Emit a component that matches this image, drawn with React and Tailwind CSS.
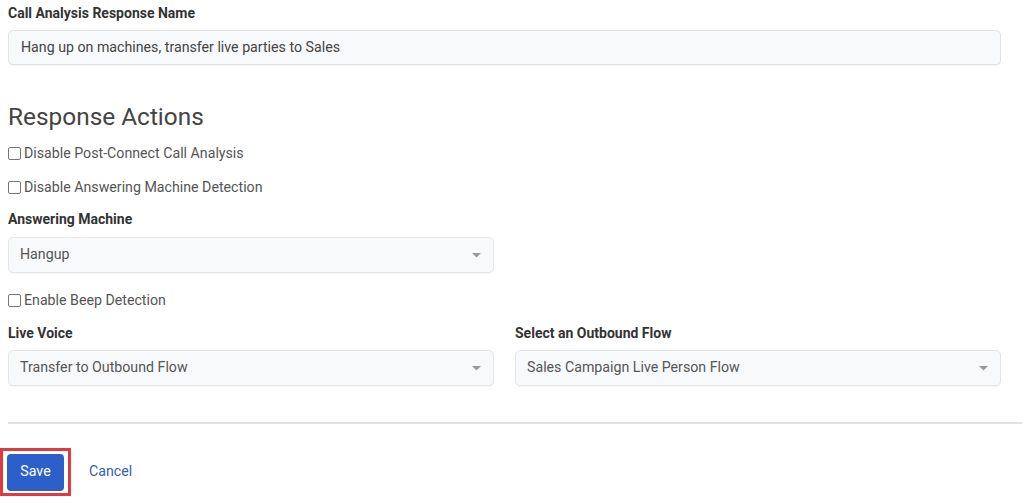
import React from 'react'

const font = { fontFamily: 'Roboto, "Liberation Sans", sans-serif' }

function Label({ children, className = '' }) {
  return (
    <div className={`text-[14px] leading-5 font-bold text-[#333] ${className}`}>{children}</div>
  )
}

function Check({ label, className = '' }) {
  return (
    <label className={`flex items-center gap-[3px] text-[14.2px] leading-5 text-[#555] ${className}`}>
      <span className="w-[13px] h-[13px] rounded-[2px] border border-[#767676] bg-white" />
      <span>{label}</span>
    </label>
  )
}

function Select({ value }) {
  return (
    <div className="h-9 flex items-center justify-between pl-[11px] pr-[10px] rounded-[5px] border border-[#e6e6e6] bg-[#f8f9fa] shadow-[0_1px_1px_rgba(0,0,0,0.04)] text-[14.2px] text-[#555]">
      <span>{value}</span>
      <svg width="9" height="5" viewBox="0 0 9 5" className="mr-[2px]">
        <path d="M0 0 L9 0 L4.5 4.5 Z" fill="#999" />
      </svg>
    </div>
  )
}

export default function App() {
  return (
    <div className="w-[1024px] h-[503px] bg-white overflow-hidden" style={font}>
      <div className="pl-2 pt-[3px]">
        <div className="w-[993px]">
          <Label>Call Analysis Response Name</Label>
          <div className="mt-[7px] h-[35px] flex items-center pl-3 rounded-[5px] border border-[#e3e3e3] bg-[#f8f9fa] shadow-[0_1px_1px_rgba(0,0,0,0.05)] text-[14.2px] text-[#444]">
            Hang up on machines, transfer live parties to Sales
          </div>

          <h2 className="mt-[36px] text-[24.4px] leading-8 text-[#444] font-normal">Response Actions</h2>
          <Check className="mt-[10px]" label="Disable Post-Connect Call Analysis" />
          <Check className="mt-[14px]" label="Disable Answering Machine Detection" />

          <Label className="mt-3">Answering Machine</Label>
          <div className="mt-2 w-[486px]">
            <Select value="Hangup" />
          </div>

          <Check className="mt-[17px]" label="Enable Beep Detection" />

          <div className="mt-[13px] grid grid-cols-[486px_486px] gap-x-[21px]">
            <div>
              <Label>Live Voice</Label>
              <div className="mt-[7px]">
                <Select value="Transfer to Outbound Flow" />
              </div>
            </div>
            <div>
              <Label>Select an Outbound Flow</Label>
              <div className="mt-[7px]">
                <Select value="Sales Campaign Live Person Flow" />
              </div>
            </div>
          </div>
        </div>

        <div className="mt-[36px] w-[1014px] h-[2px] bg-[#e2e2e2]" />
      </div>

      <div className="mt-[24px] flex items-center">
        <div className="p-[3px] border-[3px] border-[#e0393e] w-[71px] h-[48px] flex items-center justify-center">
          <button className="w-[57px] h-[37px] rounded-[4px] bg-[#2d5fcb] text-white text-[14.2px]">Save</button>
        </div>
        <a className="ml-[18px] text-[14.2px] text-[#3a5cb3]">Cancel</a>
      </div>
    </div>
  )
}
